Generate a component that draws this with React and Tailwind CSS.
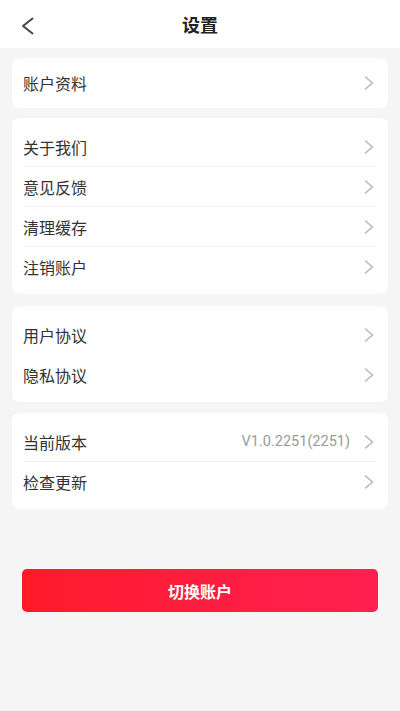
import React from "react";

const Chevron = () => (
  <svg width="10" height="14" viewBox="0 0 10 14" fill="none" className="shrink-0">
    <path d="M1.5 1 L8.5 7 L1.5 13" stroke="#b3b3b3" strokeWidth="1.4" strokeLinecap="round" strokeLinejoin="round" />
  </svg>
);

const Row = ({ label, value, divider }) => (
  <div className={`flex h-10 items-center justify-between ${divider ? "border-b border-[#efefef]" : ""}`}>
    <span className="text-base text-[#333]">{label}</span>
    <div className="flex items-center gap-[14px] pr-[3px]">
      {value && <span className="text-[14.5px] text-[#9a9a9a] font-['Roboto',sans-serif]">{value}</span>}
      <Chevron />
    </div>
  </div>
);

export default function App() {
  return (
    <div className="min-h-[711px] bg-[#f5f5f5] font-['Noto_Sans_CJK_SC','Noto_Sans',sans-serif]">
      <div className="relative flex h-12 items-center justify-center bg-white">
        <div className="absolute left-[21px] top-[17px]">
          <svg width="13" height="18" viewBox="0 0 13 18" fill="none">
            <path d="M11.5 1.5 L2 9 L11.5 16.5" stroke="#454545" strokeWidth="2" strokeLinecap="round" strokeLinejoin="round" />
          </svg>
        </div>
        <span className="text-lg font-bold text-[#222]">设置</span>
      </div>

      <div className="px-3">
        <div className="mt-[10px] flex h-[50px] items-center rounded-lg bg-white px-[11px]">
          <div className="w-full">
            <div className="flex items-center justify-between">
              <span className="text-base text-[#333]">账户资料</span>
              <div className="pr-[3px]"><Chevron /></div>
            </div>
          </div>
        </div>

        <div className="mt-[10px] rounded-lg bg-white px-[11px] pt-[9px] pb-[7px]">
          <Row label="关于我们" divider />
          <Row label="意见反馈" divider />
          <Row label="清理缓存" divider />
          <Row label="注销账户" />
        </div>

        <div className="mt-[12px] rounded-lg bg-white px-[11px] pt-[9px] pb-[7px]">
          <Row label="用户协议" />
          <Row label="隐私协议" />
        </div>

        <div className="mt-[11px] rounded-lg bg-white px-[11px] pt-[9px] pb-[7px]">
          <Row label="当前版本" value="V1.0.2251(2251)" divider />
          <Row label="检查更新" />
        </div>

        <div className="px-[10px] pt-[60px]">
          <button className="flex h-[43px] w-full items-center justify-center rounded-[5px] bg-gradient-to-r from-[#ff1a2a] to-[#ff2050] text-base font-bold text-white">
            切换账户
          </button>
        </div>
      </div>
    </div>
  );
}
